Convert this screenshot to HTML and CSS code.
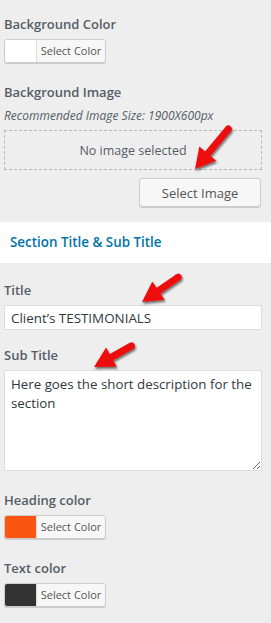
FILE: index.html
```html
<!DOCTYPE html>
<html lang="en">
<head>
    <meta charset="UTF-8">
    <meta name="viewport" content="width=device-width, initial-scale=1.0">
    <title>Section Settings</title>
    <link rel="stylesheet" href="styles.css">
</head>
<body>

    <div class="panel">
        <div class="field first">
            <div class="label">Background Color</div>
            <button class="color-btn"><span class="swatch swatch-white"></span><span class="color-text">Select Color</span></button>
        </div>

        <div class="field">
            <div class="label">Background Image</div>
            <div class="hint">Recommended Image Size: 1900X600px</div>
            <div class="image-box">No image selected</div>
            <div class="image-actions">
                <button class="image-btn">Select Image</button>
            </div>
        </div>
    </div>

    <div class="section-head">Section Title &amp; Sub Title</div>

    <div class="panel">
        <div class="field title-field">
            <div class="label">Title</div>
            <input class="text-input" type="text" value="Client’s TESTIMONIALS">
        </div>

        <div class="field sub-field">
            <div class="label">Sub Title</div>
            <textarea class="text-area">Here goes the short description for the section</textarea>
        </div>

        <div class="field heading-field">
            <div class="label">Heading color</div>
            <button class="color-btn"><span class="swatch swatch-orange"></span><span class="color-text">Select Color</span></button>
        </div>

        <div class="field">
            <div class="label">Text color</div>
            <button class="color-btn"><span class="swatch swatch-dark"></span><span class="color-text">Select Color</span></button>
        </div>
    </div>

    <!-- red pointer arrows drawn over the screenshot -->
    <svg class="arrows" width="271" height="623" viewBox="0 0 271 623">
        <defs>
            <filter id="shadow" x="-50%" y="-50%" width="200%" height="200%">
                <feDropShadow dx="1" dy="2" stdDeviation="1.2" flood-color="#000" flood-opacity="0.55"/>
            </filter>
        </defs>
        <g filter="url(#shadow)" fill="#ee1010" stroke="#ee1010">
            <g transform="translate(195 169) rotate(129.8)">
                <line x1="-52" y1="0" x2="-14" y2="0" stroke-width="7" stroke-linecap="round"/>
                <polygon points="0,0 -20,-11 -20,11" stroke="none"/>
            </g>
            <g transform="translate(142 302) rotate(145.6)">
                <line x1="-44" y1="0" x2="-14" y2="0" stroke-width="7" stroke-linecap="round"/>
                <polygon points="0,0 -20,-11 -20,11" stroke="none"/>
            </g>
            <g transform="translate(94 367) rotate(150.6)">
                <line x1="-43" y1="0" x2="-14" y2="0" stroke-width="7" stroke-linecap="round"/>
                <polygon points="0,0 -20,-11 -20,11" stroke="none"/>
            </g>
        </g>
    </svg>

</body>
</html>
```

FILE: styles.css
```css
body {
    margin: 0;
    padding: 0;
    font-family: 'Open Sans', 'Noto Sans', sans-serif;
    background: #eeeeee;
    color: #555d66;
    position: relative;
    width: 271px;
    min-height: 623px;
    overflow: hidden;
}

.panel {
    padding: 0 9px 0 4px;
}

.field {
    margin-top: 19px;
}

.field.first {
    margin-top: 14px;
}

.title-field {
    margin-top: 17px;
}

.sub-field {
    margin-top: 15px;
}

.label {
    font-size: 13px;
    font-weight: 600;
    line-height: 20px;
    margin-bottom: 5px;
}

.hint {
    font-size: 12px;
    font-style: italic;
    line-height: 18px;
    margin-top: 1px;
    margin-bottom: 5px;
}

.color-btn {
    display: flex;
    align-items: stretch;
    height: 24px;
    width: 102px;
    padding: 0;
    border: 1px solid #cccccc;
    border-radius: 3px;
    background: #f7f7f7;
    box-shadow: 0 1px 0 #cccccc;
    overflow: hidden;
    font-family: inherit;
    cursor: pointer;
}

.swatch {
    width: 31px;
    border-right: 1px solid #dddddd;
}

.swatch-white {
    background: #ffffff;
}

.swatch-orange {
    background: #fc5411;
}

.swatch-dark {
    background: #333333;
}

.color-text {
    flex: 1;
    font-size: 11px;
    line-height: 22px;
    color: #555555;
    text-align: center;
}

.image-box {
    height: 38px;
    border: 1px dashed #b4b9be;
    display: flex;
    align-items: center;
    justify-content: center;
    font-size: 12.5px;
    color: #555d66;
}

.image-actions {
    display: flex;
    justify-content: flex-end;
    margin-top: 8px;
    padding-right: 1px;
}

.image-btn {
    width: 122px;
    height: 29px;
    border: 1px solid #cccccc;
    border-radius: 3px;
    background: #f7f7f7;
    box-shadow: 0 1px 0 #cccccc;
    font-family: inherit;
    font-size: 13px;
    color: #555555;
    cursor: pointer;
}

.section-head {
    margin-top: 15px;
    height: 41px;
    background: #ffffff;
    color: #0073aa;
    font-size: 13.4px;
    font-weight: 600;
    line-height: 41px;
    padding-left: 10px;
}

.text-input {
    display: block;
    box-sizing: border-box;
    width: 100%;
    height: 25px;
    border: 1px solid #dddddd;
    background: #ffffff;
    padding: 0 6px;
    font-family: inherit;
    font-size: 13.4px;
    color: #32373c;
    outline: none;
}

.text-area {
    display: block;
    box-sizing: border-box;
    width: 100%;
    height: 101px;
    border: 1px solid #dddddd;
    background: #ffffff;
    padding: 4px 6px;
    margin: 0;
    font-family: inherit;
    font-size: 13.3px;
    line-height: 19px;
    color: #32373c;
    outline: none;
}

.heading-field {
    margin-top: 19px;
}

.arrows {
    position: absolute;
    top: 0;
    left: 0;
    pointer-events: none;
}
```
